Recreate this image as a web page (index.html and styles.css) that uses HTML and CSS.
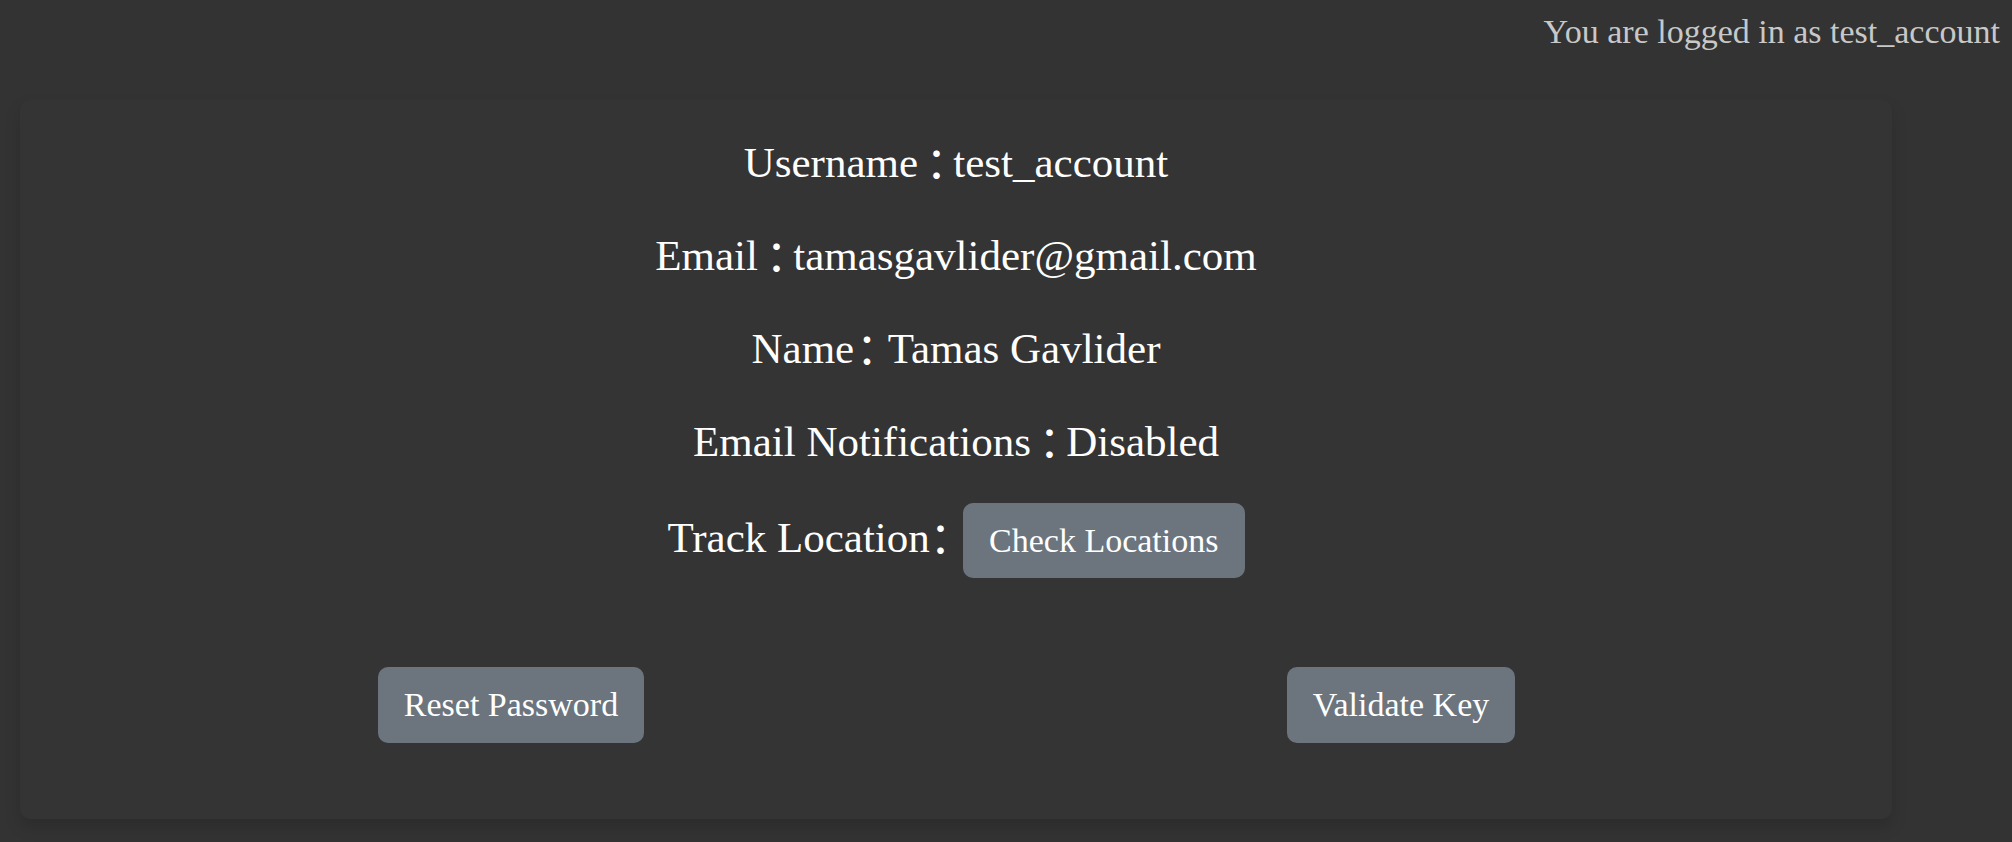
FILE: index.html
```html
<!DOCTYPE html>
<html lang="en">
<head>
<meta charset="utf-8">
<title>Account</title>
<link rel="stylesheet" href="styles.css">
</head>
<body>
<div class="topbar">You are logged in as test_account</div>
<main class="card">
  <section class="info">
    <p class="row">Username <span class="sep">：</span>test_account</p>
    <p class="row">Email <span class="sep">：</span>tamasgavlider@gmail.com</p>
    <p class="row">Name<span class="sep sep-tight">：</span> Tamas Gavlider</p>
    <p class="row">Email Notifications <span class="sep">：</span>Disabled</p>
    <p class="row track">Track Location<span class="sep sep-end">：</span> <button class="btn">Check Locations</button></p>
  </section>
  <section class="actions">
    <div class="col"><button class="btn">Reset Password</button></div>
    <div class="col"><button class="btn">Validate Key</button></div>
  </section>
</main>
</body>
</html>
```
FILE: styles.css
```css
html, body {
  margin: 0;
  background: #333333;
}
body {
  font-family: "Liberation Serif", "Noto Sans CJK JP", serif;
  font-feature-settings: "halt";
  min-height: 842px;
}
.topbar {
  text-align: right;
  color: #c8c8c8;
  font-size: 34px;
  line-height: 40px;
  padding: 12px 12px 0 0;
}
.card {
  margin: 48px 120px 0 20px;
  background: #343434;
  border-radius: 10px;
  box-shadow: 0 8px 16px rgba(0, 0, 0, 0.15);
  padding: 38px 46px 76px;
}
.info {
  display: flex;
  flex-direction: column;
  align-items: center;
}
.row {
  margin: 0;
  font-size: 43px;
  line-height: 50px;
  color: #ffffff;
}
.row + .row {
  margin-top: 43px;
}
.row.track {
  margin-top: 36px;
}
.sep {
  vertical-align: -0.09em;
  line-height: 0;
  margin: 0 6px 0 -3px;
}
.sep-tight {
  margin: 0 0 0 2px;
}
.sep-end {
  margin: 0 1px 0 0;
}
.btn {
  font-family: inherit;
  font-feature-settings: inherit;
  font-size: 34px;
  line-height: 51px;
  padding: 12px 26px;
  color: #ffffff;
  background: #6c757d;
  border: 0;
  border-radius: 10px;
  vertical-align: baseline;
}
.actions {
  display: grid;
  grid-template-columns: 1fr 1fr;
  margin-top: 89px;
}
.actions .btn {
  padding: 12px 26px 13px;
}
.col {
  display: flex;
  justify-content: center;
}
```
